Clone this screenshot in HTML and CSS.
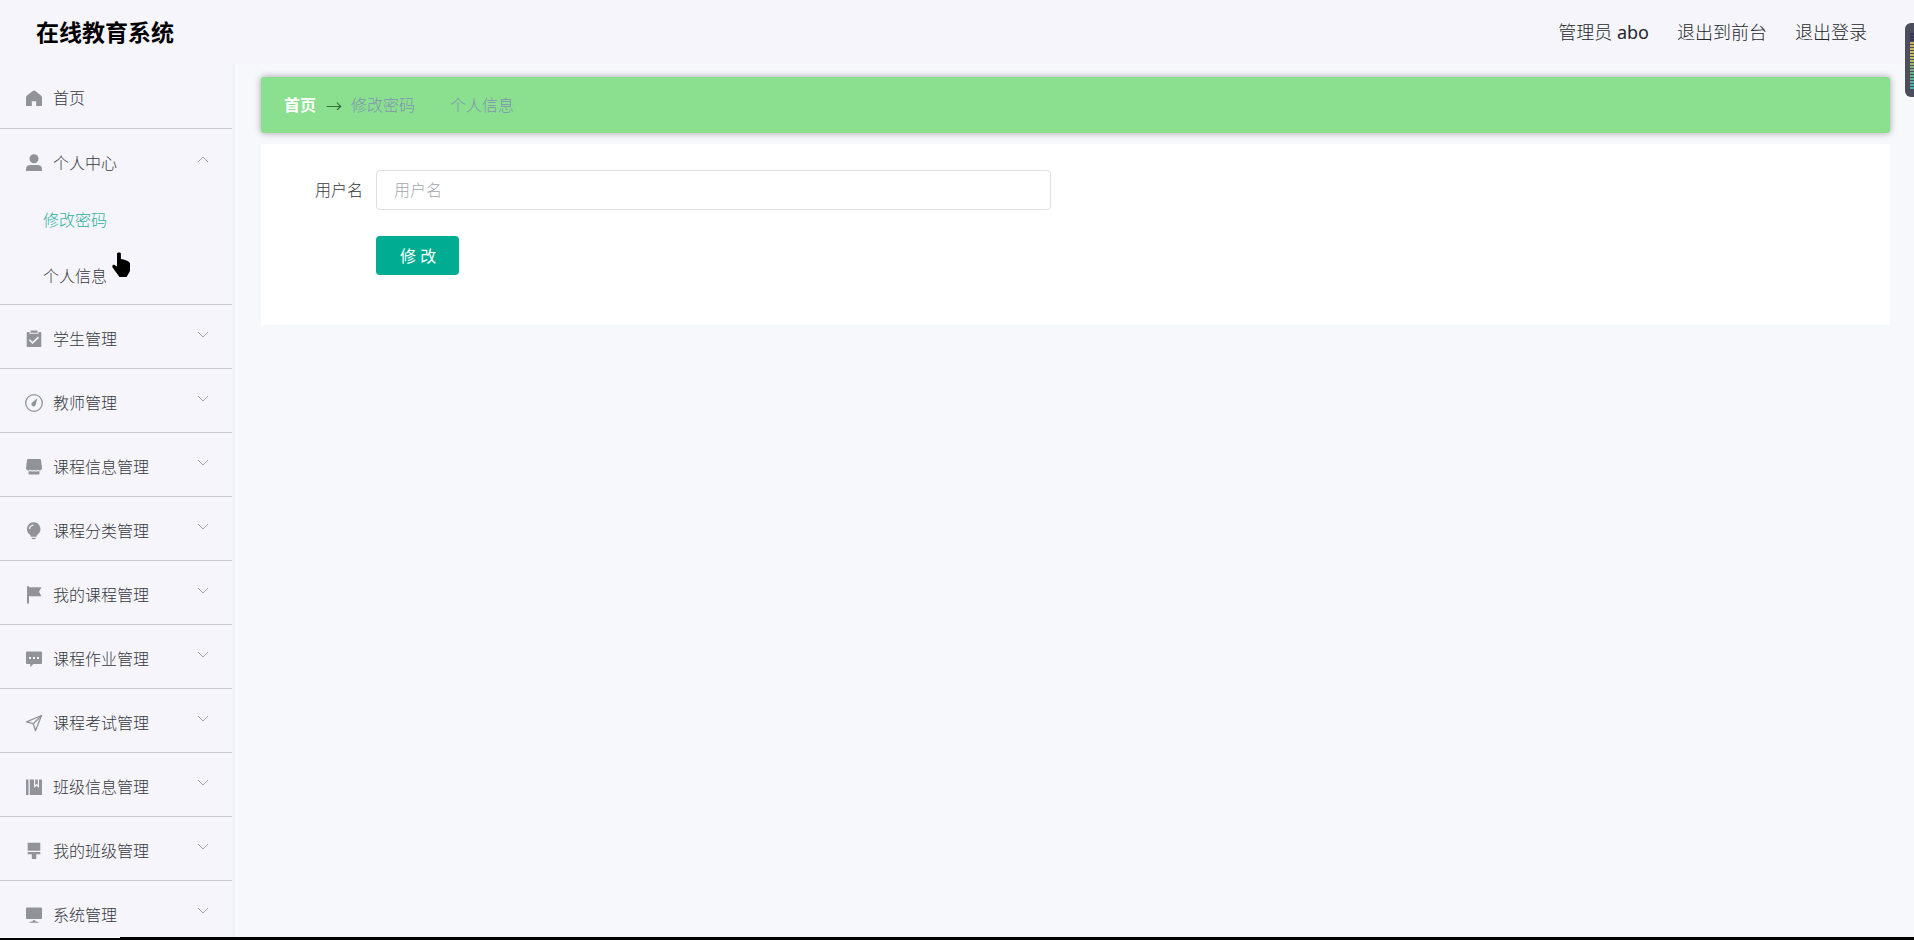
FILE: index.html
```html
<!DOCTYPE html>
<html lang="zh-CN">
<head>
<meta charset="utf-8">
<title>在线教育系统</title>
<link rel="stylesheet" href="styles.css">
</head>
<body>
<div class="app">
  <header class="header">
    <h1 class="title">在线教育系统</h1>
    <nav class="user-nav">
      <span>管理员 <span class="user-name">abo</span></span>
      <a href="#">退出到前台</a>
      <a href="#">退出登录</a>
    </nav>
  </header>
  <div class="body">
    <aside class="sidebar">
      <ul class="menu">
        <li class="group">
          <a class="item" href="#">
            <svg class="icon" viewBox="0 0 18 18"><path d="M9 1.600c.5 0 .9.200 1.300.5l5.400 4.200c.8.600 1.300 1.500 1.300 2.500V16c0 .600-.4 1-1 1h-4.800v-4.800H6.800V17H2c-.6 0-1-.4-1-1V8.800c0-1 .5-1.900 1.300-2.500l5.400-4.200C8.100 1.800 8.500 1.600 9 1.600z"/></svg>
            <span>首页</span>
          </a>
        </li>
        <li class="group">
          <button class="item" type="button" aria-expanded="true">
            <svg class="icon" viewBox="0 0 18 18"><circle cx="9" cy="4.800" r="4.500"/><path d="M1 17v-2c0-2.500 1.800-4 4.300-4h7.400c2.500 0 4.300 1.500 4.300 4v2z"/></svg>
            <span>个人中心</span>
            <svg class="chevron" viewBox="0 0 12 12"><path d="M1 9l5-5 5 5"/></svg>
          </button>
          <ul class="submenu">
            <li><a class="subitem active" href="#">修改密码</a></li>
            <li><a class="subitem" href="#">个人信息</a></li>
          </ul>
        </li>
        <li class="group">
          <button class="item" type="button">
            <svg class="icon" viewBox="0 0 18 18"><path fill-rule="evenodd" d="M2.500 2h2v1.800h9V2h2c.500 0 .8.300.8.800v13.400c0 .500-.3.800-.8.800h-13c-.5 0-.8-.3-.8-.8V2.800c0-.5.3-.8.800-.8zM4.800 9.200L3.700 10.300l3.900 3.700 6.500-6.300-1.100-1.100-5.400 5.200z"/><path d="M5.500.500h7v2.300h-7z"/></svg>
            <span>学生管理</span>
            <svg class="chevron" viewBox="0 0 12 12"><path d="M1 3l5 5 5-5"/></svg>
          </button>
        </li>
        <li class="group">
          <button class="item" type="button">
            <svg class="icon" viewBox="0 0 18 18"><circle class="line" cx="9" cy="9" r="8.300"/><path d="M12.300 4.300l-1.500 6a2.200 2.200 0 1 1-3.300-2z"/></svg>
            <span>教师管理</span>
            <svg class="chevron" viewBox="0 0 12 12"><path d="M1 3l5 5 5-5"/></svg>
          </button>
        </li>
        <li class="group">
          <button class="item" type="button">
            <svg class="icon" viewBox="0 0 18 18"><path d="M3 1h12c.6 0 .9.300 1 .9l1 8.100c0 1.500-1 2.500-2.200 2.500-.9 0-1.500-.4-2-1-.5.600-1.100 1-1.900 1s-1.400-.4-1.900-1c-.5.600-1.100 1-1.900 1s-1.400-.4-1.900-1c-.5.600-1.100 1-2 1C2 12.500 1 11.500 1 10l1-8.100c.1-.6.400-.9 1-.9z"/><path d="M3.500 13.600c.8 0 1.200-.2 1.700-.5 1.200.8 2.700.8 3.800 0 1.200.8 2.700.8 3.800 0 .5.300.9.500 1.700.5v2c0 .600-.4 1-1 1h-9c-.6 0-1-.4-1-1z"/></svg>
            <span>课程信息管理</span>
            <svg class="chevron" viewBox="0 0 12 12"><path d="M1 3l5 5 5-5"/></svg>
          </button>
        </li>
        <li class="group">
          <button class="item" type="button">
            <svg class="icon" viewBox="0 0 18 18"><path fill-rule="evenodd" d="M8.700.300a6.800 6.800 0 0 1 3.900 12.300c-.6.500-1 1.200-1.100 2.200h-5.600c-.1-1-.5-1.700-1.100-2.200A6.800 6.800 0 0 1 8.700.300zM3.900 7.100h1.300c0-2.100 1.300-3.300 3.300-3.400V2.400C5.700 2.500 3.900 4.400 3.900 7.100z"/><path d="M6.800 15.800h3.800v1.300H6.800z"/></svg>
            <span>课程分类管理</span>
            <svg class="chevron" viewBox="0 0 12 12"><path d="M1 3l5 5 5-5"/></svg>
          </button>
        </li>
        <li class="group">
          <button class="item" type="button">
            <svg class="icon" viewBox="0 0 18 18"><path d="M2 .3h2v1h12.500l-2.500 4.500 2.500 4.500H4v7.200H2z"/></svg>
            <span>我的课程管理</span>
            <svg class="chevron" viewBox="0 0 12 12"><path d="M1 3l5 5 5-5"/></svg>
          </button>
        </li>
        <li class="group">
          <button class="item" type="button">
            <svg class="icon" viewBox="0 0 18 18"><path fill-rule="evenodd" d="M1.800 1.500h14.400c.500 0 .8.300.8.800v10.900c0 .500-.3.800-.8.800H8.500L5.200 17v-3H1.800c-.5 0-.8-.3-.8-.8V2.300c0-.5.3-.8.800-.8zM4 7v2h2V7zm4 0v2h2V7zm4 0v2h2V7z"/></svg>
            <span>课程作业管理</span>
            <svg class="chevron" viewBox="0 0 12 12"><path d="M1 3l5 5 5-5"/></svg>
          </button>
        </li>
        <li class="group">
          <button class="item" type="button">
            <svg class="icon" viewBox="0 0 18 18"><path class="line" d="M16.500 1.500L1.500 7.800l6.800 1.900 2.200 7z"/><path class="line" d="M16.500 1.500L8.300 9.700"/></svg>
            <span>课程考试管理</span>
            <svg class="chevron" viewBox="0 0 12 12"><path d="M1 3l5 5 5-5"/></svg>
          </button>
        </li>
        <li class="group">
          <button class="item" type="button">
            <svg class="icon" viewBox="0 0 18 18"><path d="M1 1.500h2.500V17H1zM4.800 1.500h4.200v8.500l2.500-2.200L14 10V1.500h3V17H4.800z"/><path d="M10.200 1.500h2.600v5.600l-1.300-1.100-1.300 1.100z"/></svg>
            <span>班级信息管理</span>
            <svg class="chevron" viewBox="0 0 12 12"><path d="M1 3l5 5 5-5"/></svg>
          </button>
        </li>
        <li class="group">
          <button class="item" type="button">
            <svg class="icon" viewBox="0 0 18 18"><path d="M2.700.8h12.600v8H2.700zM2.700 10h12.600v2.200h-4V17H6.800v-4.800H2.700z"/></svg>
            <span>我的班级管理</span>
            <svg class="chevron" viewBox="0 0 12 12"><path d="M1 3l5 5 5-5"/></svg>
          </button>
        </li>
        <li class="group">
          <button class="item" type="button">
            <svg class="icon" viewBox="0 0 18 18"><path d="M1.800 1.500h14.400c.500 0 .8.300.8.800v9.900c0 .500-.3.800-.8.800H1.800c-.5 0-.8-.3-.8-.8V2.300c0-.5.300-.8.800-.8zM7.800 14.300h2.400v1c1.700.100 3 .600 3.800 1.400H4c.8-.8 2.100-1.300 3.800-1.400z"/></svg>
            <span>系统管理</span>
            <svg class="chevron" viewBox="0 0 12 12"><path d="M1 3l5 5 5-5"/></svg>
          </button>
        </li>
      </ul>
    </aside>
    <main class="main">
      <nav class="breadcrumb">
        <a class="crumb-home" href="#">首页</a>
        <span class="sep">→</span>
        <span>修改密码</span>
        <span class="sep sep-faded">→</span>
        <span>个人信息</span>
      </nav>
      <form class="card">
        <div class="field">
          <label class="label" for="username">用户名</label>
          <input class="input" id="username" type="text" placeholder="用户名">
        </div>
        <div class="field">
          <span class="label"></span>
          <button class="submit" type="button">修 改</button>
        </div>
      </form>
    </main>
  </div>
  <div class="progress"><div class="progress-start"></div></div>
  <div class="meter"><div class="meter-bars"></div></div>
  <svg class="pointer" viewBox="0 0 18 26"><path d="M5 1.500C5.500.3 8.500.3 8.900 1.500V7l2.500.5 2.500.8 2.600 1.200 1.500 1.500v8l-2 3.500-1.500 2.500H7.500L5.300 22 2 17.500.3 15c-.3-1.500 1-2.500 2.200-2L5 14.500z"/></svg>
</div>
</body>
</html>
```
FILE: styles.css
```css
* {
  box-sizing: border-box;
}

body {
  margin: 0;
  background: #f7f8fc;
  color: #25262a;
  font-family: "Noto Sans", "Noto Sans CJK SC", sans-serif;
  font-size: 16px;
  font-weight: 300;
  line-height: 24px;
}

a {
  color: inherit;
  text-decoration: none;
}

button,
input {
  font: inherit;
}

ul {
  margin: 0;
  padding: 0;
  list-style: none;
}

.app {
  position: relative;
  display: flex;
  flex-direction: column;
  height: 100vh;
  overflow: hidden;
}

.header {
  display: flex;
  flex: none;
  align-items: center;
  justify-content: space-between;
  height: 64px;
  padding: 0 47px 0 36px;
  background: #f5f5fb;
}

.title {
  margin: 0;
  color: #000;
  font-size: 23px;
  font-weight: 700;
}

.user-nav {
  display: flex;
  gap: 28px;
  font-size: 18px;
}

.user-name {
  font-weight: 400;
}

.body {
  display: flex;
  flex: 1;
  min-height: 0;
}

.sidebar {
  flex: none;
  width: 235px;
  overflow: hidden;
  background: #f5f5fb;
  border-right: 3px solid #f1f2f7;
}

.group {
  border-bottom: 1px solid #c9cad1;
}

.item {
  display: flex;
  align-items: center;
  gap: 10px;
  width: 100%;
  height: 63px;
  padding: 4px 23px 0 25px;
  border: 0;
  background: none;
  color: #36383e;
  text-align: left;
}

.group:first-child .item {
  height: 64px;
}

.icon {
  flex: none;
  width: 18px;
  height: 18px;
  fill: #909399;
}

.icon .line {
  fill: none;
  stroke: #909399;
  stroke-width: 1.3;
  stroke-linejoin: round;
}

.chevron {
  width: 12px;
  height: 12px;
  margin: 0 0 8px auto;
  fill: none;
  stroke: #a4a6ac;
}

.subitem {
  display: flex;
  align-items: center;
  height: 56px;
  padding-left: 43px;
  color: #36383e;
}

.subitem.active {
  color: #2fae9e;
}

.main {
  flex: 1;
  min-width: 0;
  padding: 13px 24px 24px 26px;
}

.breadcrumb {
  display: flex;
  align-items: center;
  gap: 10px;
  height: 56px;
  margin-bottom: 11px;
  padding: 0 23px;
  border-radius: 3px;
  background: #8ae08f;
  box-shadow: 0 0 7px rgba(0, 0, 0, 0.35);
  color: #8294b4;
}

.crumb-home {
  color: #fff;
  font-weight: 700;
}

.sep {
  width: 15px;
  color: #235b28;
  font-family: "Noto Sans CJK SC", sans-serif;
}

.sep-faded {
  color: #8edc98;
}

.card {
  display: flex;
  flex-direction: column;
  gap: 26px;
  padding: 26px 0 50px;
  background: #fff;
}

.field {
  display: flex;
  align-items: center;
  width: 48.5%;
}

.label {
  flex: none;
  width: 115px;
  padding-right: 13px;
  color: #36383e;
  text-align: right;
}

.input {
  flex: 1;
  min-width: 0;
  height: 40px;
  padding: 0 17px;
  border: 1px solid #dcdfe6;
  border-radius: 4px;
  background: #fff;
  color: #606266;
}

.input::placeholder {
  color: #a4a7b0;
}

.submit {
  height: 39px;
  padding: 0 23px 0 24px;
  border: 0;
  border-radius: 4px;
  background: #00ac92;
  color: #fff;
  font-weight: 400;
}

.progress {
  position: absolute;
  right: 0;
  bottom: 0;
  left: 0;
  height: 3px;
  background: #000;
}

.progress-start {
  width: 120px;
  height: 1px;
  background: #fff;
}

.meter {
  position: absolute;
  top: 23px;
  right: 0;
  width: 9px;
  height: 74px;
  padding: 10px 0 8px 5px;
  border-radius: 6px 0 0 6px;
  background: #4c4e5e;
}

.meter-bars {
  height: 56px;
  background:
    repeating-linear-gradient(transparent 0 2px, #4c4e5e 2px 3px),
    linear-gradient(#33365c 0 8px, #d0a860 8px, #c8c060 24px, #70b080 38px, #45b5b0);
}

.pointer {
  position: absolute;
  top: 252px;
  left: 112px;
  width: 18px;
  height: 26px;
}
```
